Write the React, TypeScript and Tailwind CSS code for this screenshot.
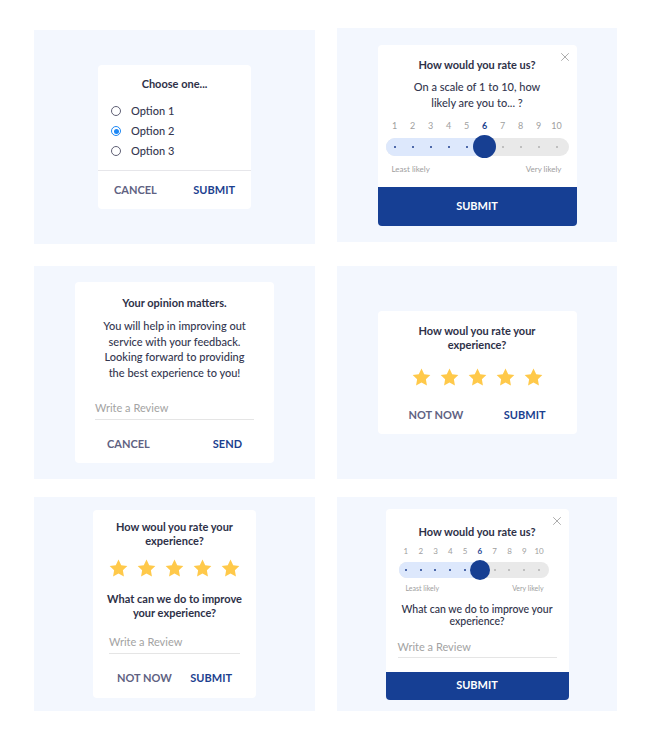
import { X } from "lucide-react";

const font = { fontFamily: "Lato, 'Open Sans', sans-serif" };

function Star() {
  return (
    <svg width="21" height="21" viewBox="0 0 24 24" className="shrink-0">
      <path
        d="M12 1.8l3.1 6.4 7 1-5.1 4.9 1.2 7L12 17.8l-6.2 3.3 1.2-7L1.9 9.2l7-1z"
        fill="#ffc94a"
      />
    </svg>
  );
}

function Stars() {
  return (
    <div className="flex justify-center gap-[7px]">
      {[1, 2, 3, 4, 5].map((i) => (
        <Star key={i} />
      ))}
    </div>
  );
}

function Radio({ checked, label }: { checked?: boolean; label: string }) {
  return (
    <div className="flex items-center h-[20px]">
      {checked ? (
        <span className="w-[10px] h-[10px] rounded-full border-[1.5px] border-[#1e88f5] flex items-center justify-center">
          <span className="w-[5px] h-[5px] rounded-full bg-[#1e88f5]" />
        </span>
      ) : (
        <span className="w-[10px] h-[10px] rounded-full border border-[#5f6075]" />
      )}
      <span className="ml-[10px] text-[11px] text-[#34374f] font-medium">{label}</span>
    </div>
  );
}

function Slider({
  col,
  h,
  knob,
  numSize,
  trackW,
}: {
  col: number;
  h: number;
  knob: number;
  numSize: string;
  trackW: number;
}) {
  const nums = [1, 2, 3, 4, 5, 6, 7, 8, 9, 10];
  const knobX = col * 5.5;
  return (
    <div style={{ width: trackW }}>
      <div className="flex">
        {nums.map((n) => (
          <div
            key={n}
            style={{ width: col }}
            className={`text-center ${numSize} ${
              n === 6 ? "text-[#1c3f8f] font-bold" : "text-[#a0a0a0]"
            }`}
          >
            {n}
          </div>
        ))}
      </div>
      <div
        className="relative rounded-full bg-[#e9e9e9] mt-[6px]"
        style={{ height: h }}
      >
        <div
          className="absolute left-0 top-0 bottom-0 rounded-l-full bg-[#dde8fc]"
          style={{ width: knobX }}
        />
        <div className="relative flex h-full items-center">
          {nums.map((n) => (
            <div key={n} style={{ width: col }} className="flex justify-center">
              <span
                className={`w-[2px] h-[2px] rounded-full ${
                  n < 6 ? "bg-[#1c3f8f]" : "bg-[#b0b0b0]"
                }`}
              />
            </div>
          ))}
        </div>
        <div
          className="absolute top-1/2 rounded-full bg-[#173f92]"
          style={{
            width: knob,
            height: knob,
            left: knobX - knob / 2,
            marginTop: -knob / 2,
          }}
        />
      </div>
    </div>
  );
}

function Panel({ children, className = "" }: { children: React.ReactNode; className?: string }) {
  return (
    <div className={`bg-[#f3f7fe] flex items-center justify-center ${className}`}>
      {children}
    </div>
  );
}

export default function App() {
  return (
    <div className="w-[650px] h-[743px] bg-white pl-[34px] pt-[28px]" style={font}>
      {/* row 1 */}
      <div className="flex gap-[22px]">
        <Panel className="w-[281px] h-[214px] mt-[2px]">
          <div className="w-[153px] h-[144px] bg-white rounded-[4px] flex flex-col">
            <div className="pt-[12px] text-center text-[11px] leading-[14px] font-bold text-[#2e3148]">
              Choose one...
            </div>
            <div className="mt-[10px] pl-[13px]">
              <Radio label="Option 1" />
              <Radio checked label="Option 2" />
              <Radio label="Option 3" />
            </div>
            <div className="mt-[9px] border-t border-[#e6e6ea]" />
            <div className="flex-1 flex items-center justify-between px-[16px] text-[11px] font-bold">
              <span className="text-[#5f6282]">CANCEL</span>
              <span className="text-[#1c3f8f]">SUBMIT</span>
            </div>
          </div>
        </Panel>
        <Panel className="w-[280px] h-[214px]">
          <div className="relative w-[199px] h-[181px] bg-white rounded-[4px] flex flex-col">
            <X
              className="absolute right-[5px] top-[5px] text-[#9a9a9a]"
              size={14}
              strokeWidth={1.4}
            />
            <div className="pt-[13px] text-center text-[11px] leading-[14px] font-bold text-[#2e3148]">
              How would you rate us?
            </div>
            <div className="mt-[7px] text-center text-[11px] leading-[16px] font-medium text-[#34374f]">
              On a scale of 1 to 10, how
              <br />
              likely are you to... ?
            </div>
            <div className="mt-[9px] px-[8px]">
              <Slider col={18} h={18} knob={23} numSize="text-[9px] leading-[12px]" trackW={183} />
              <div className="mt-[8px] flex justify-between pl-[6px] pr-[7px] text-[8px] leading-[10px] text-[#9e9e9e]">
                <span>Least likely</span>
                <span>Very likely</span>
              </div>
            </div>
            <div className="mt-auto h-[39px] bg-[#163f94] rounded-b-[4px] flex items-center justify-center text-white text-[11px] font-bold">
              SUBMIT
            </div>
          </div>
        </Panel>
      </div>

      {/* row 2 */}
      <div className="flex gap-[22px] mt-[22px]">
        <Panel className="w-[281px] h-[213px]">
          <div className="w-[199px] h-[181px] bg-white rounded-[4px] flex flex-col">
            <div className="pt-[14px] text-center text-[11px] leading-[14px] font-bold text-[#2e3148]">
              Your opinion matters.
            </div>
            <div className="mt-[8px] text-center text-[11px] leading-[15.5px] font-medium text-[#34374f]">
              You will help in improving out
              <br />
              service with your feedback.
              <br />
              Looking forward to providing
              <br />
              the best experience to you!
            </div>
            <div className="mx-[20px] mt-[21px] pb-[4px] border-b border-[#e5e5e5] text-[11px] leading-[14px] text-[#a3a3a3]">
              Write a Review
            </div>
            <div className="mt-[17px] flex justify-between px-[32px] text-[11px] leading-[14px] font-bold">
              <span className="text-[#5f6282]">CANCEL</span>
              <span className="text-[#1c3f8f]">SEND</span>
            </div>
          </div>
        </Panel>
        <Panel className="w-[280px] h-[213px]">
          <div className="w-[199px] h-[123px] bg-white rounded-[4px] flex flex-col">
            <div className="pt-[13px] text-center text-[11px] leading-[14px] font-bold text-[#2e3148]">
              How woul you rate your
              <br />
              experience?
            </div>
            <div className="mt-[15px]">
              <Stars />
            </div>
            <div className="mt-[20px] flex justify-between px-[31px] text-[11px] leading-[14px] font-bold">
              <span className="text-[#5f6282]">NOT NOW</span>
              <span className="text-[#1c3f8f]">SUBMIT</span>
            </div>
          </div>
        </Panel>
      </div>

      {/* row 3 */}
      <div className="flex gap-[22px] mt-[18px]">
        <Panel className="w-[281px] h-[214px]">
          <div className="w-[163px] h-[188px] bg-white rounded-[4px] flex flex-col">
            <div className="pt-[10px] text-center text-[11px] leading-[14px] font-bold text-[#2e3148]">
              How woul you rate your
              <br />
              experience?
            </div>
            <div className="mt-[10px]">
              <Stars />
            </div>
            <div className="mt-[13px] text-center text-[11px] leading-[14px] font-bold text-[#2e3148]">
              What can we do to improve
              <br />
              your experience?
            </div>
            <div className="mx-[16px] mt-[15px] pb-[4px] border-b border-[#e5e5e5] text-[11px] leading-[14px] text-[#a3a3a3]">
              Write a Review
            </div>
            <div className="mt-[17px] flex justify-between px-[24px] text-[11px] leading-[14px] font-bold">
              <span className="text-[#5f6282]">NOT NOW</span>
              <span className="text-[#1c3f8f]">SUBMIT</span>
            </div>
          </div>
        </Panel>
        <Panel className="w-[280px] h-[214px]">
          <div className="relative w-[183px] h-[191px] bg-white rounded-[4px] flex flex-col">
            <X
              className="absolute right-[5px] top-[5px] text-[#9a9a9a]"
              size={14}
              strokeWidth={1.4}
            />
            <div className="pt-[16px] text-center text-[11px] leading-[14px] font-bold text-[#2e3148]">
              How would you rate us?
            </div>
            <div className="mt-[7px] pl-[13px]">
              <Slider col={14.8} h={16} knob={20} numSize="text-[8px] leading-[10px]" trackW={150} />
              <div className="mt-[6px] w-[150px] flex justify-between pl-[7px] pr-[5px] text-[7px] leading-[8px] text-[#9e9e9e]">
                <span>Least likely</span>
                <span>Very likely</span>
              </div>
            </div>
            <div className="mt-[11px] text-center text-[10.5px] leading-[12px] font-medium text-[#2e3148]">
              What can we do to improve your
              <br />
              experience?
            </div>
            <div className="mx-[12px] mt-[13px] pb-[3px] border-b border-[#e5e5e5] text-[11px] leading-[14px] text-[#a3a3a3]">
              Write a Review
            </div>
            <div className="mt-auto h-[28px] bg-[#163f94] rounded-b-[4px] flex items-center justify-center text-white text-[11px] font-bold">
              SUBMIT
            </div>
          </div>
        </Panel>
      </div>
    </div>
  );
}
